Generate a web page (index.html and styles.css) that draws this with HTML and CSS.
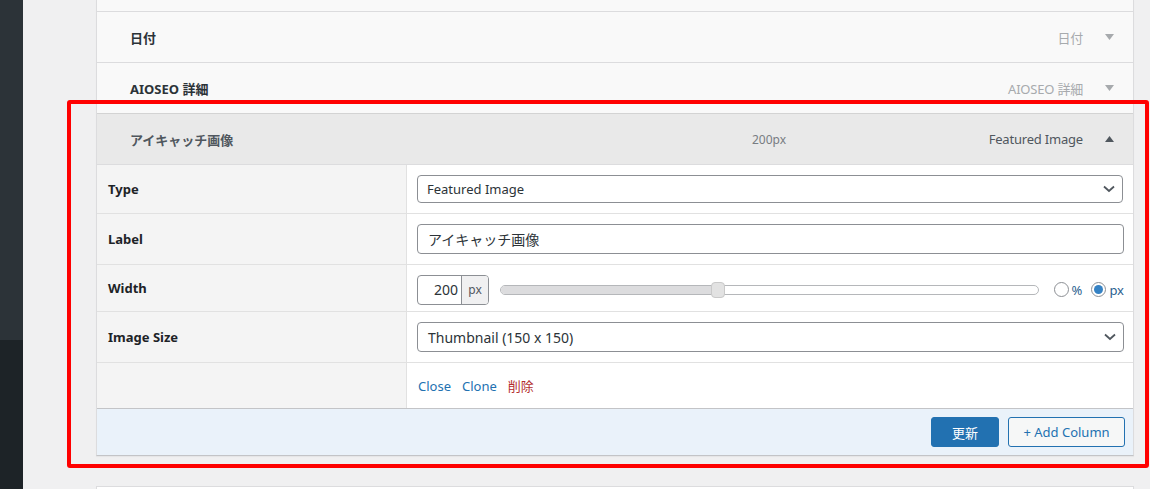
FILE: index.html
```html
<!DOCTYPE html>
<html lang="ja">
<head>
<meta charset="utf-8">
<title>Columns</title>
<link rel="stylesheet" href="styles.css">
</head>
<body>
<div class="layout">
  <aside class="sidebar">
    <div class="sidebar-top"></div>
    <div class="sidebar-bottom"></div>
  </aside>
  <main class="main">
    <div class="columns">
      <div class="col-head stub"></div>
      <div class="col-head">
        <span class="hname">日付</span>
        <span class="htype muted">日付</span>
        <span class="toggle"><svg width="9" height="6" viewBox="0 0 9 6"><polygon points="0,0 9,0 4.5,6" fill="#a7aaad"/></svg></span>
      </div>
      <div class="col-head">
        <span class="hname">AIOSEO 詳細</span>
        <span class="htype muted">AIOSEO 詳細</span>
        <span class="toggle"><svg width="9" height="6" viewBox="0 0 9 6"><polygon points="0,0 9,0 4.5,6" fill="#a7aaad"/></svg></span>
      </div>
      <div class="col-head open">
        <span class="hname wide">アイキャッチ画像</span>
        <span class="hwidth">200px</span>
        <span class="htype">Featured Image</span>
        <span class="toggle"><svg width="9" height="6" viewBox="0 0 9 6"><polygon points="0,6 9,6 4.5,0" fill="#50575e"/></svg></span>
      </div>

      <div class="settings">
        <div class="field r-type">
          <div class="field-label">Type</div>
          <div class="field-input">
            <div class="select small"><span>Featured Image</span><svg width="12" height="8" viewBox="0 0 12 8"><polyline points="1,1.5 6,6 11,1.5" fill="none" stroke="#50575e" stroke-width="1.8"/></svg></div>
          </div>
        </div>
        <div class="field r-label">
          <div class="field-label">Label</div>
          <div class="field-input">
            <input class="text" type="text" value="アイキャッチ画像">
          </div>
        </div>
        <div class="field r-width">
          <div class="field-label">Width</div>
          <div class="field-input width-row">
            <div class="num-group"><span class="num">200</span><span class="unit">px</span></div>
            <div class="slider"><div class="fill" style="width:40.4%"></div><div class="thumb" style="left:39.2%"></div></div>
            <div class="radios">
              <span class="radio"><span class="circle"></span>%</span>
              <span class="radio"><span class="circle on"></span>px</span>
            </div>
          </div>
        </div>
        <div class="field r-size">
          <div class="field-label">Image Size</div>
          <div class="field-input">
            <div class="select"><span>Thumbnail (150 x 150)</span><svg width="12" height="8" viewBox="0 0 12 8"><polyline points="1,1.5 6,6 11,1.5" fill="none" stroke="#50575e" stroke-width="1.8"/></svg></div>
          </div>
        </div>
        <div class="field r-actions">
          <div class="field-label"></div>
          <div class="field-input actions">
            <a class="link">Close</a>
            <a class="link">Clone</a>
            <a class="link danger">削除</a>
          </div>
        </div>
      </div>

      <div class="footer">
        <button class="btn primary">更新</button>
        <button class="btn secondary">+ Add Column</button>
      </div>
    </div>
    <div class="next-card"></div>
  </main>
</div>
<div class="highlight"></div>
</body>
</html>
```

FILE: styles.css
```css
* { box-sizing: border-box; }

body {
  margin: 0;
  width: 1150px;
  height: 489px;
  overflow: hidden;
  position: relative;
  background: #f0f0f1;
  font-family: "Noto Sans", "Noto Sans CJK JP", sans-serif;
  font-size: 13px;
  color: #1d2327;
}

.layout {
  display: flex;
  height: 489px;
  overflow: hidden;
}

.sidebar {
  width: 23px;
  flex: none;
  display: flex;
  flex-direction: column;
}
.sidebar-top { height: 340px; background: #2c3338; }
.sidebar-bottom { flex: 1; background: #1d2327; }

.main {
  flex: 1;
  padding: 0 16px 0 73px;
}

.columns {
  background: #fff;
  border-left: 1px solid #dcdcde;
  border-right: 1px solid #dcdcde;
  border-bottom: 1px solid #c3c4c7;
  box-shadow: 0 1px 1px rgba(0,0,0,0.04);
}

.col-head {
  display: flex;
  align-items: center;
  height: 51px;
  border-bottom: 1px solid #dcdcde;
  background: #f9f9f9;
  padding: 0 19px 0 33px;
  font-weight: 700;
  color: #2c3338;
}
.col-head.stub { height: 12px; }
.col-head.open {
  background: #e9e9e9;
  color: #50575e;
  border-top: 1px solid #d3d3d3;
  margin-top: -1px;
  height: 52px;
}

.hname { flex: 1; }
.hname.wide { flex: none; width: 622px; }
.hwidth {
  flex: 1;
  font-weight: 400;
  font-size: 12px;
  color: #787c82;
}
.htype {
  font-weight: 400;
  color: #50575e;
  letter-spacing: -0.2px;
}
.htype.muted { color: #a7aaad; }
.toggle {
  width: 9px;
  margin-left: 22px;
  display: flex;
  align-items: center;
}

.field {
  display: grid;
  grid-template-columns: 310px 1fr;
  border-bottom: 1px solid #e1e1e1;
}
.r-type { height: 49px; }
.r-label { height: 51px; }
.r-width { height: 47px; }
.r-size { height: 51px; }
.r-actions { height: 45px; border-bottom: none; }

.field-label {
  background: #f4f4f4;
  border-right: 1px solid #e1e1e1;
  padding-left: 11px;
  font-weight: 700;
  display: flex;
  align-items: center;
  color: #1d2327;
}
.field-input {
  display: flex;
  align-items: center;
  padding: 0 9px 0 10px;
}

.select {
  flex: 1;
  height: 30px;
  border: 1px solid #8c8f94;
  border-radius: 4px;
  display: flex;
  align-items: center;
  justify-content: space-between;
  padding: 0 7px 0 10px;
  font-size: 14px;
  color: #2c3338;
  background: #fff;
}
.select.small {
  height: 28px;
  font-size: 13px;
  padding-left: 9px;
  margin-right: 1px;
}

.text {
  flex: 1;
  height: 30px;
  border: 1px solid #8c8f94;
  border-radius: 4px;
  padding: 0 10px;
  font-family: inherit;
  font-size: 14px;
  color: #2c3338;
  background: #fff;
  outline: none;
}

.width-row { padding-top: 3px; }
.num-group {
  display: flex;
  height: 30px;
  border: 1px solid #8c8f94;
  border-radius: 4px;
  overflow: hidden;
  flex: none;
}
.num {
  width: 43px;
  text-align: right;
  padding-right: 3px;
  font-size: 14px;
  line-height: 28px;
  color: #2c3338;
}
.unit {
  width: 27px;
  border-left: 1px solid #8c8f94;
  background: #f0f0f1;
  color: #50575e;
  font-size: 12px;
  line-height: 28px;
  text-align: center;
}

.slider {
  flex: 1;
  margin-left: 11px;
  height: 10px;
  border: 1px solid #b5b7ba;
  border-radius: 5px;
  background: #fff;
  position: relative;
}
.fill {
  height: 100%;
  background: #dcdcde;
  border-radius: 4px 0 0 4px;
}
.thumb {
  position: absolute;
  top: -4px;
  width: 14px;
  height: 16px;
  border: 1px solid #c9c9c9;
  border-radius: 4px;
  background: #e2e2e2;
}

.radios {
  display: flex;
  align-items: center;
  gap: 9px;
  margin-left: 15px;
  flex: none;
}
.radio {
  display: flex;
  align-items: center;
  gap: 3px;
  font-size: 13px;
  color: #2c5f8f;
}
.circle {
  width: 15px;
  height: 15px;
  border: 1px solid #8c8f94;
  border-radius: 50%;
  background: #fff;
  display: flex;
  align-items: center;
  justify-content: center;
}
.circle.on::after {
  content: "";
  width: 9px;
  height: 9px;
  border-radius: 50%;
  background: #3582c4;
}

.actions { gap: 11px; padding-left: 11px; }
.link { color: #2271b1; cursor: pointer; }
.link.danger { color: #b32d2e; }

.footer {
  height: 47px;
  background: #eaf2fa;
  border-top: 1px solid #c3c4c7;
  display: flex;
  align-items: center;
  justify-content: flex-end;
  gap: 9px;
  padding-right: 8px;
}
.btn {
  height: 30px;
  border-radius: 3px;
  font-family: inherit;
  font-size: 13px;
  padding: 0 10px;
  cursor: pointer;
}
.btn.primary {
  width: 68px;
  background: #2271b1;
  border: 1px solid #2271b1;
  color: #fff;
}
.btn.secondary {
  width: 117px;
  background: #f6f7f7;
  border: 1px solid #2271b1;
  color: #2271b1;
}

.next-card {
  margin-top: 30px;
  height: 3px;
  background: #fff;
  border: 1px solid #dcdcde;
  border-bottom: none;
}

.highlight {
  position: absolute;
  left: 67px;
  top: 100px;
  width: 1082px;
  height: 368px;
  border: 4px solid #ff0000;
  border-radius: 3px;
  pointer-events: none;
}
```
